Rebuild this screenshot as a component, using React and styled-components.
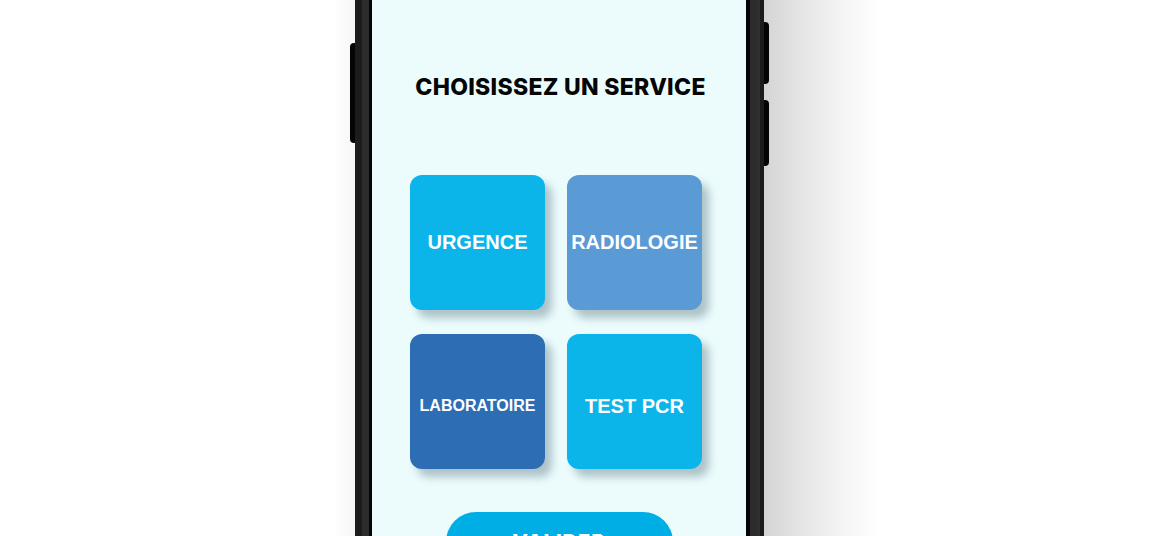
import React from 'react';
import styled, { createGlobalStyle } from 'styled-components';

const GlobalStyle = createGlobalStyle`
  html, body {
    margin: 0;
    padding: 0;
    background: #ffffff;
  }
  #root {
    height: 536px;
  }
`;

const Stage = styled.div`
  display: flex;
  justify-content: center;
  height: 536px;
  overflow: hidden;
  background: #ffffff;
  padding-right: 51px;
`;

const Phone = styled.div`
  position: relative;
  display: flex;
  width: 409px;
  height: 100%;
  background: #1c1c1c;
  padding: 0 4px 0 7px;
  box-sizing: border-box;

  &::before {
    content: '';
    position: absolute;
    top: 0;
    bottom: 0;
    right: 100%;
    width: 22px;
    background: linear-gradient(to left, #f6f6f6, #ffffff);
  }

  &::after {
    content: '';
    position: absolute;
    top: 0;
    bottom: 0;
    left: 100%;
    width: 115px;
    background: linear-gradient(to right, #d4d4d4 0%, #e4e4e4 30%, #f3f3f3 65%, #ffffff 100%);
  }
`;

const SideButton = styled.div`
  position: absolute;
  z-index: 2;
  width: 5px;
  top: ${({ $top }) => $top}px;
  height: ${({ $height }) => $height}px;
  background: #050505;
  ${({ $side }) =>
    $side === 'left'
      ? 'right: 100%; border-radius: 4px 0 0 4px;'
      : 'left: 100%; border-radius: 0 4px 4px 0;'}
`;

const Bezel = styled.div`
  flex: 1;
  display: flex;
  background: #2c2c2c;
  padding: 0 10px 0 7px;
  box-shadow: inset -3px 0 0 #2f2f2f;
`;

const Screen = styled.div`
  flex: 1;
  display: flex;
  flex-direction: column;
  align-items: center;
  background: #ecfcfd;
  border-left: 3px solid #050505;
  border-right: 4px solid #050505;
  padding-top: 75px;
`;

const Title = styled.h1`
  margin: 0 0 0 3px;
  font-family: Inter, 'Noto Sans', sans-serif;
  font-weight: 800;
  font-size: 23px;
  line-height: 24px;
  color: #050505;
  letter-spacing: 0.3px;
`;

const ServiceGrid = styled.div`
  display: grid;
  grid-template-columns: repeat(2, 135px);
  grid-auto-rows: 135px;
  column-gap: 22px;
  row-gap: 24px;
  margin-top: 76px;
  margin-right: 6px;
`;

const ServiceCard = styled.button`
  display: flex;
  align-items: center;
  justify-content: center;
  border: none;
  border-radius: 12px;
  padding: ${({ $shift }) => ($shift ? '9px 0 0' : '0')};
  background: ${({ $color }) => $color};
  color: #ffffff;
  font-family: 'Liberation Sans', Arial, sans-serif;
  font-weight: 700;
  font-size: ${({ $small }) => ($small ? '16px' : '20px')};
  box-shadow: 7px 8px 9px rgba(70, 100, 110, 0.38);
  cursor: pointer;
`;

const ValidateButton = styled.button`
  margin-top: 43px;
  width: 227px;
  height: 60px;
  flex-shrink: 0;
  border: none;
  border-radius: 30px;
  background: #00aee6;
  color: #ffffff;
  font-family: Inter, 'Noto Sans', sans-serif;
  font-weight: 800;
  font-size: 20px;
  letter-spacing: 1px;
  cursor: pointer;
`;

const services = [
  { label: 'URGENCE', color: '#0bb4e9' },
  { label: 'RADIOLOGIE', color: '#5a9ad5' },
  { label: 'LABORATOIRE', color: '#2c6db3', small: true, shift: true },
  { label: 'TEST PCR', color: '#0bb4e9', shift: true },
];

export default function App() {
  return (
    <>
      <GlobalStyle />
      <Stage>
        <Phone>
          <SideButton $side="left" $top={43} $height={100} />
          <SideButton $side="right" $top={22} $height={62} />
          <SideButton $side="right" $top={100} $height={66} />
          <Bezel>
            <Screen>
              <Title>CHOISISSEZ UN SERVICE</Title>
              <ServiceGrid>
                {services.map((s) => (
                  <ServiceCard
                    key={s.label}
                    $color={s.color}
                    $small={s.small}
                    $shift={s.shift}
                  >
                    {s.label}
                  </ServiceCard>
                ))}
              </ServiceGrid>
              <ValidateButton>VALIDER</ValidateButton>
            </Screen>
          </Bezel>
        </Phone>
      </Stage>
    </>
  );
}
